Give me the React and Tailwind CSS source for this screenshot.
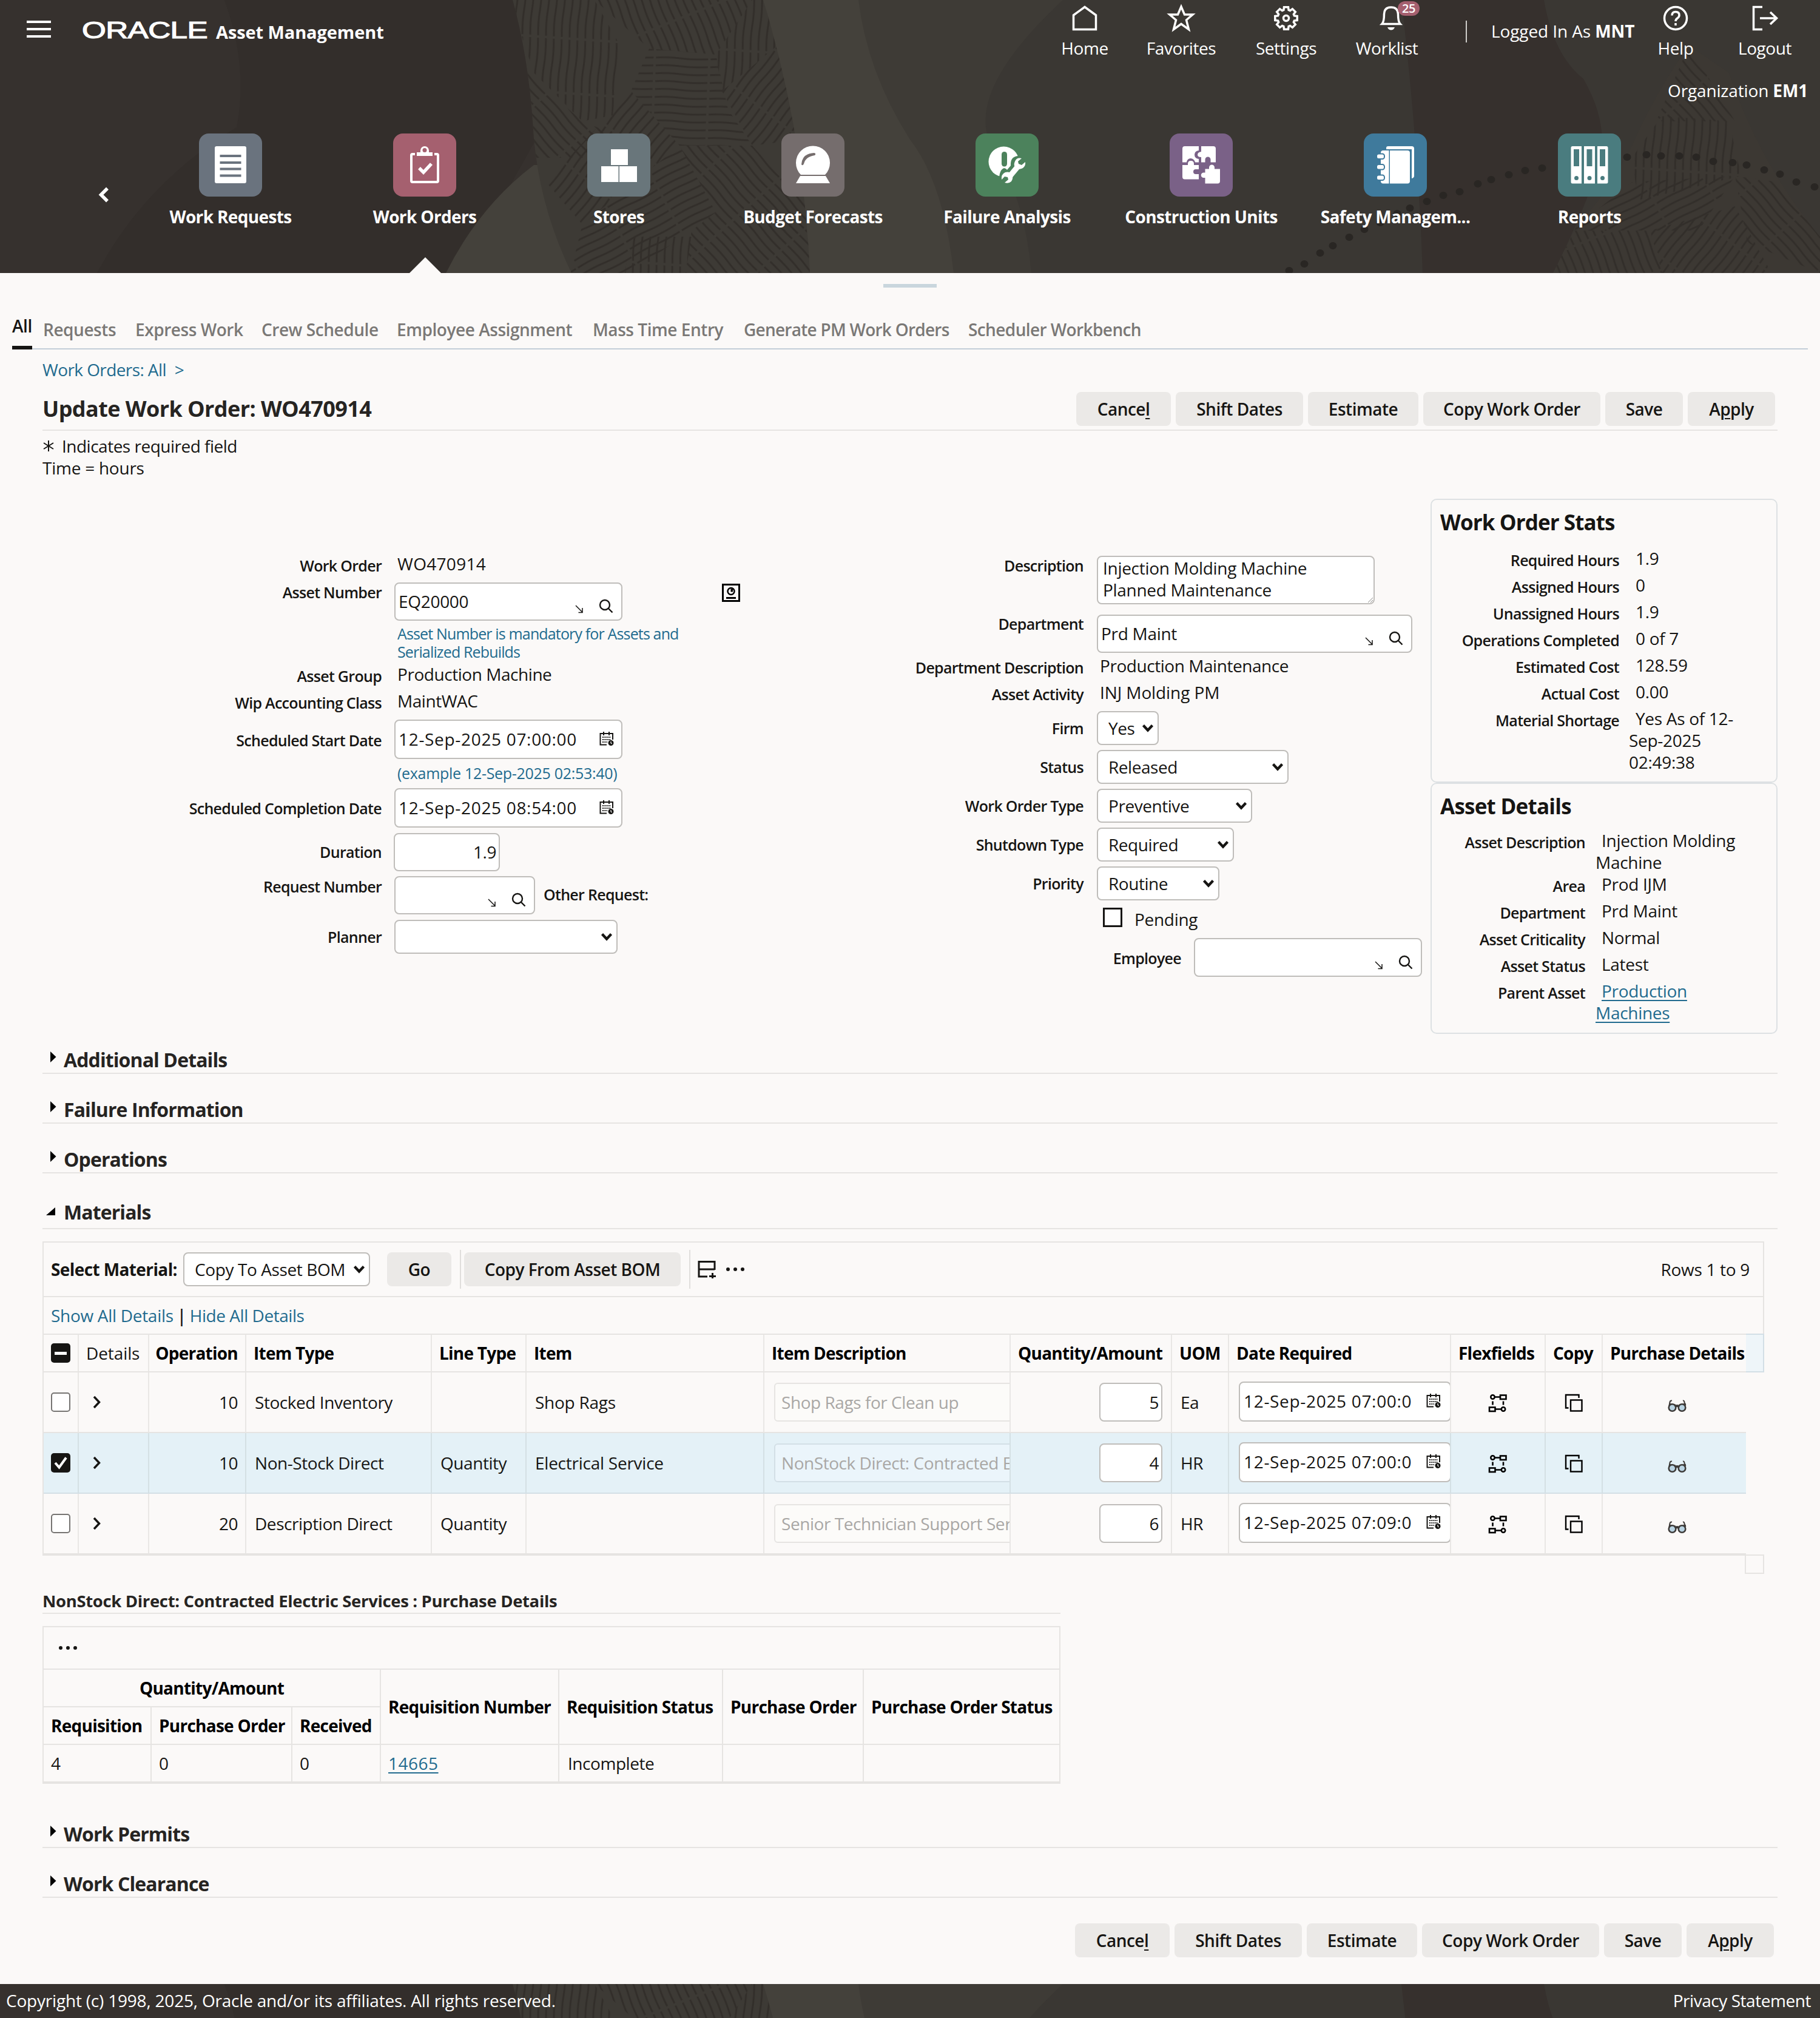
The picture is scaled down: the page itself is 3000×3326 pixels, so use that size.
import React from "react";

const modules = [
  { name: "Work Requests", color: "bg-[#6a737e]", icon: "requests" },
  { name: "Work Orders", color: "bg-[#a5606f]", icon: "orders" },
  { name: "Stores", color: "bg-[#69767b]", icon: "stores" },
  { name: "Budget Forecasts", color: "bg-[#756d6d]", icon: "budget" },
  { name: "Failure Analysis", color: "bg-[#4c825c]", icon: "failure" },
  { name: "Construction Units", color: "bg-[#7a6187]", icon: "construction" },
  { name: "Safety Managem...", color: "bg-[#3f7a9c]", icon: "safety" },
  { name: "Reports", color: "bg-[#4a7c7f]", icon: "reports" },
];

const tabs = [
  { name: "Requests", width: "w-[152px]" },
  { name: "Express Work", width: "w-[208px]" },
  { name: "Crew Schedule", width: "w-[223px]" },
  { name: "Employee Assignment", width: "w-[323px]" },
  { name: "Mass Time Entry", width: "w-[249px]" },
  { name: "Generate PM Work Orders", width: "w-[370px] tracking-[-0.75px]" },
  { name: "Scheduler Workbench", width: "w-[300px] tracking-[-0.6px]" },
];

const materials = [
  { op: 10, type: "Stocked Inventory", line: "", item: "Shop Rags", desc: "Shop Rags for Clean up", qty: 5, uom: "Ea", date: "12-Sep-2025 07:00:0" },
  { op: 10, type: "Non-Stock Direct", line: "Quantity", item: "Electrical Service", desc: "NonStock Direct: Contracted Electric", qty: 4, uom: "HR", date: "12-Sep-2025 07:00:0", selected: true },
  { op: 20, type: "Description Direct", line: "Quantity", item: "", desc: "Senior Technician Support Services", qty: 6, uom: "HR", date: "12-Sep-2025 07:09:0" },
];

const COLS =
  "grid grid-cols-[58px_116px_160px_306px_156px_392px_406px_266px_94px_366px_156px_94px_236px]";

/* ---------- Header artwork ---------- */

const HatchPatterns = ({ id }) => (
  <defs>
    {[4, 38, -42, 92, 62, -22].map((angle, i) => (
      <pattern
        key={angle}
        id={`${id}-h${i}`}
        width="13"
        height="90"
        patternUnits="userSpaceOnUse"
        patternTransform={`rotate(${angle})`}
      >
        <path d="M5 0 Q7 25 5 45 T5 86" stroke="#322e2a" strokeWidth="3" fill="none" />
      </pattern>
    ))}
    <clipPath id={`${id}-left`}>
      <path d="M845 0 Q870 90 878 200 Q884 330 942 450 L1335 450 Q1325 220 1258 0 Z" />
    </clipPath>
    <clipPath id={`${id}-right`}>
      <path d="M2784 75 Q2730 150 2690 240 Q2650 320 2600 370 L2560 450 L3000 450 L3000 390 Q2900 270 2850 120 Z" />
    </clipPath>
  </defs>
);

const dots = [
  [2125, 446], [2150, 435], [2176, 417], [2197, 405], [2224, 391], [2249, 378], [2275, 367], [2303, 352],
  [2324, 343], [2352, 332], [2379, 322], [2406, 316], [2436, 303], [2458, 296], [2487, 288], [2514, 281],
  [2542, 277], [2682, 259], [2714, 255], [2738, 257], [2768, 257], [2796, 259], [2824, 266], [2856, 268],
  [2879, 272], [2908, 280], [2934, 287], [2961, 300], [2991, 308],
];

const HeaderArt = ({ id }) => (
  <svg className="absolute left-0 top-0" width="3000" height="450" viewBox="0 0 3000 450">
    <HatchPatterns id={id} />
    <rect width="3000" height="450" fill="#36312e" />
    <path d="M370 0 Q410 110 390 210 Q240 300 160 450 L760 450 L900 200 L860 0 Z" fill="#332e2b" />
    <path d="M880 272 Q790 340 735 450 H960 V272 Z" fill="#44413b" />
    <path d="M1240 0 H1500 V450 H1300 Z" fill="#44413b" />
    <path d="M1415 0 Q1430 120 1500 230 V0 Z" fill="#3e3b36" />
    <path d="M1500 0 H3000 V450 H1500 Z" fill="#3a3733" />
    <path d="M1500 0 H1752 Q1580 160 1640 250 Q1690 330 1700 450 H1500 Z" fill="#3e3b36" />
    <path d="M1500 230 Q1555 300 1572 450 H1500 Z" fill="#44413b" />
    <path d="M2310 0 H2545 Q2560 90 2610 130 Q2650 200 2638 260 Q2620 330 2560 450 H2345 Q2338 240 2310 0 Z" fill="#36302d" />
    <g clipPath={`url(#${id}-left)`}>
      <rect x="840" width="500" height="450" fill="#3d3a35" />
      <path d="M840 0 H980 L1025 80 L1010 190 L960 200 L880 120 Z" fill={`url(#${id}-h0)`} />
      <path d="M980 0 H1240 L1180 90 L1070 80 Z" fill={`url(#${id}-h5)`} />
      <path d="M870 120 L960 200 L1010 220 L960 260 H870 Z" fill={`url(#${id}-h2)`} />
      <path d="M1070 80 L1180 90 L1200 180 L1240 240 L1120 240 L1040 150 Z" fill={`url(#${id}-h3)`} />
      <path d="M1240 0 H1300 V60 L1190 150 L1180 90 Z" fill={`url(#${id}-h0)`} />
      <path d="M1300 60 L1320 230 L1240 240 L1190 150 Z" fill={`url(#${id}-h1)`} />
      <path d="M1040 150 L1120 240 L960 370 L900 300 Z" fill={`url(#${id}-h1)`} />
      <path d="M1120 240 L1240 240 L1330 340 V390 L1180 350 Z" fill={`url(#${id}-h2)`} />
      <path d="M960 370 L1120 240 L1180 350 L1040 450 H940 Z" fill={`url(#${id}-h4)`} />
      <path d="M1040 390 L1140 390 L1130 450 H1030 Z" fill={`url(#${id}-h0)`} />
      <path d="M1140 380 L1180 350 L1340 390 V450 H1130 Z" fill={`url(#${id}-h2)`} />
    </g>
    <g clipPath={`url(#${id}-right)`}>
      <rect x="2550" width="450" height="450" fill="#3c3833" />
      <path d="M2784 75 L2860 200 L2730 200 Z" fill={`url(#${id}-h2)`} />
      <path d="M2740 190 L2850 200 L2870 290 L2700 330 L2690 260 Z" fill={`url(#${id}-h0)`} />
      <path d="M2690 300 L2860 290 L2800 380 L2590 380 Z" fill={`url(#${id}-h4)`} />
      <path d="M2860 290 L3000 310 V450 L2880 400 Z" fill={`url(#${id}-h2)`} />
      <path d="M2560 380 H2720 L2740 450 H2550 Z" fill={`url(#${id}-h5)`} />
      <path d="M2720 380 L2860 340 L2920 450 H2740 Z" fill={`url(#${id}-h1)`} />
      <path d="M2850 120 L3000 390 V300 Z" fill={`url(#${id}-h0)`} />
    </g>
    {dots.map(([x, y]) => (
      <ellipse key={x} cx={x} cy={y} rx="6.5" ry="6" fill="#292623" />
    ))}
  </svg>
);

/* ---------- Icons ---------- */

const ModuleIcon = ({ name }) => {
  const common = { width: 104, height: 104, viewBox: "0 0 104 104", fill: "#fff" };
  switch (name) {
    case "requests":
      return (
        <svg {...common}>
          <path fillRule="evenodd" d="M29 21H75a3 3 0 0 1 3 3V79a3 3 0 0 1-3 3H29a3 3 0 0 1-3-3V24a3 3 0 0 1 3-3ZM34.500 35v4H69.500v-4ZM34.500 46v4H69.500v-4ZM34.500 56.500v4H69.500v-4ZM34.500 67.500v4H69.500v-4Z" />
        </svg>
      );
    case "orders":
      return (
        <svg {...common}>
          <path d="M36 34H32a2 2 0 0 0-2 2V78a2 2 0 0 0 2 2H72a2 2 0 0 0 2-2V36a2 2 0 0 0-2-2H68" fill="none" stroke="#fff" strokeWidth="4" />
          <path fillRule="evenodd" d="M39 37V31H45V28a7 7 0 0 1 14 0V31H65V37ZM52 24a3.5 3.5 0 1 0 0 7 3.5 3.5 0 0 0 0-7Z" />
          <path d="M43 57 L50 64 L63 50" fill="none" stroke="#fff" strokeWidth="5.5" />
        </svg>
      );
    case "stores":
      return (
        <svg {...common}>
          <rect x="39" y="26" width="28" height="26" />
          <rect x="23" y="54" width="28.5" height="26" />
          <rect x="53" y="54" width="29" height="26" />
        </svg>
      );
    case "budget":
      return (
        <svg {...common}>
          <path d="M32 68a28 28 0 1 1 40 0Z" />
          <path d="M31 70H73L80 82H24Z" />
          <path d="M33 51Q34 33 54 32Q58 33 55 36Q40 38 37 50Q35 54 33 51Z" fill="#756d6d" />
        </svg>
      );
    case "failure":
      return (
        <svg {...common}>
          <circle cx="46.500" cy="46.500" r="25" />
          <rect x="43" y="30" width="9" height="24.500" rx="4.500" fill="#4c825c" />
          <path d="M39 76Q39 60 47 57L50 58L52 60L58 53Q57 38 70 37L86 46L62 80Z" fill="#4c825c" />
          <path d="M56 71L71 53" stroke="#fff" strokeWidth="9" />
          <path d="M76 41Q68 39 65 46Q62 52 66 56Q71 61 78 57Q83 53 82 47L76 52L71 50L70 46Z" />
          <path d="M43 76Q42 67 49 64Q56 62 60 67Q63 73 59 79Q55 83 48 81L54 76L53 72L48 71Z" />
        </svg>
      );
    case "construction":
      return (
        <svg {...common}>
          <path d="M25 21H48V28Q41 29 41 35T48 42V47.500H42Q40 41 34.500 41T28 47.500H21V25a4 4 0 0 1 4-4Z" />
          <path d="M52 21H72a4 4 0 0 1 4 4V47.500H67.500V43a4.500 4.500 0 0 0-9 0V47.500H52V39Q46 39 46 35T52 30Z" />
          <path d="M21 52H30V50Q30 45 35 45T40 50V52H48V59H43a4 4 0 0 0 0 8H48V75.500H25a4 4 0 0 1-4-4Z" />
          <path d="M58.500 58.500H65V56a4.500 4.500 0 0 1 9 0V58.500H83V78.500a4 4 0 0 1-4 4H58.500V73H56a4 4 0 0 1 0-8.500H58.500Z" />
        </svg>
      );
    case "safety":
      return (
        <svg {...common}>
          <path d="M37 25V24a3 3 0 0 1 3-3H79a4 4 0 0 1 4 4V70q0 3-4 4V26H37Z" />
          <rect x="28" y="28" width="48" height="54.500" rx="4" />
          <rect x="41.500" y="28" width="1.500" height="55" fill="#3f7a9c" />
          {[34, 51.5, 69].map((y) => (
            <rect key={y} x="21" y={y - 0.5} width="13" height="8.500" rx="3.500" stroke="#3f7a9c" strokeWidth="2" />
          ))}
        </svg>
      );
    default:
      return (
        <svg {...common}>
          <path fillRule="evenodd" d="M24 21H39V82.500H24a2.500 2.500 0 0 1-2.500-2.500V23.500A2.500 2.500 0 0 1 24 21ZM26 26V54H35V26Z" />
          <path fillRule="evenodd" d="M43 21H61V82.500H43ZM47.500 26V54H56.500V26Z" />
          <path fillRule="evenodd" d="M65 21H80a2.500 2.500 0 0 1 2.500 2.500V80a2.500 2.500 0 0 1-2.500 2.500H65ZM69 26V54H78V26Z" />
          {[30.5, 52, 73.5].map((x) => (
            <circle key={x} cx={x} cy="73.500" r="3.500" fill="#4a7c7f" />
          ))}
        </svg>
      );
  }
};

const TopIcon = ({ className = "", children }) => (
  <svg className={`h-12 w-12 ${className}`} viewBox="0 0 48 48" fill="none" stroke="#fff" strokeWidth="3.5">
    {children}
  </svg>
);

const gearPath = () => {
  const pts = [];
  for (let i = 0; i < 8; i++) {
    const a = (i * Math.PI) / 4;
    [[-0.3, 14], [-0.19, 18.5], [0.19, 18.5], [0.3, 14]].forEach(([d, r]) => {
      pts.push(`${(24 + r * Math.sin(a + d)).toFixed(1)} ${(24 - r * Math.cos(a + d)).toFixed(1)}`);
    });
  }
  return `M${pts.join("L")}Z`;
};

const SearchIcon = () => (
  <svg width="24" height="24" viewBox="0 0 24 24" fill="none" stroke="#161513" strokeWidth="2.4">
    <circle cx="10" cy="10" r="8" />
    <path d="M15.500 15.500L22.500 22.500" />
  </svg>
);

const LovArrow = () => (
  <svg width="16" height="16" viewBox="0 0 16 16" fill="none" stroke="#161513" strokeWidth="1.500">
    <path d="M2 2L13 13M13 6V13.500H6.500" />
  </svg>
);

const CalendarIcon = () => (
  <svg className="relative -top-px" width="24" height="24" viewBox="0 0 24 24" fill="none" stroke="#161513">
    <path d="M12 21.500H1.500V3H22V13" strokeWidth="2" />
    <path d="M7 0V6M16 0V6" strokeWidth="2" />
    <path d="M5 9H19M5 13H19M5 17H13" strokeWidth="2" strokeDasharray="2 1.300" />
    <circle cx="19" cy="18.500" r="4.500" fill="#161513" stroke="none" />
    <path d="M19 16V18.500L20.500 20" stroke="#fff" strokeWidth="1.200" />
  </svg>
);

const FlexIcon = () => (
  <svg width="32" height="32" viewBox="0 0 32 32" fill="none" stroke="#000" strokeWidth="2.600">
    <circle cx="7.500" cy="6.500" r="3.200" />
    <path d="M10.500 6.500H19.500M12 26.500H21.500M7.500 13.500V19.500M25 13.500V19.500" />
    <rect x="20" y="3.500" width="9.500" height="6.500" />
    <rect x="2" y="23.500" width="9.500" height="6.500" />
    <circle cx="25" cy="26.500" r="3.200" />
  </svg>
);

const CopyIcon = () => (
  <svg width="32" height="32" viewBox="0 0 32 32" fill="none" stroke="#000" strokeWidth="2.400">
    <path d="M24.500 8V3H3V24.500H7.500" />
    <rect x="11" y="11.500" width="18.500" height="18" />
  </svg>
);

const GlassesIcon = () => (
  <svg width="34" height="24" viewBox="0 0 34 24" fill="none" stroke="#3d3a38" strokeWidth="2.600">
    <path d="M8 2.500Q5 2 4.500 5T3.500 11M26 2.500Q28 2 28.500 5T29.500 11" strokeWidth="2" />
    <path d="M3 8.500L14 10.500M31 8.500L20 10.500" strokeWidth="3.500" />
    <circle cx="8.500" cy="14" r="5.800" fill="#b9d3e2" />
    <circle cx="24.500" cy="14" r="5.800" fill="#b9d3e2" />
    <path d="M13 12.500Q16.500 9.500 20 12.500" strokeWidth="4" />
  </svg>
);

const Dots = () => (
  <svg width="32" height="8" viewBox="0 0 32 8" fill="#161513">
    <circle cx="4" cy="4" r="3" />
    <circle cx="16" cy="4" r="3" />
    <circle cx="28" cy="4" r="3" />
  </svg>
);

const Chevron = () => (
  <svg className="shrink-0" width="20" height="14" viewBox="0 0 20 14" fill="none" stroke="#161513" strokeWidth="4.300">
    <path d="M2.500 2.500L10 10.500L17.500 2.500" />
  </svg>
);

/* ---------- Form pieces ---------- */

const Label = ({ className = "", children }) => (
  <div className={`shrink-0 text-right text-[25px] leading-[36px] font-semibold tracking-[-0.7px] ${className}`}>{children}</div>
);

const Lookup = ({ value = "", className }) => (
  <div className={`flex shrink-0 items-center rounded-lg border-2 border-[#bfbdba] bg-white pl-[5px] ${className}`}>
    <span className="flex-1 pb-[2px] tracking-[-0.3px]">{value}</span>
    <span className="mr-[24px] pt-[25px]"><LovArrow /></span>
    <span className="mr-[13px] pt-[15px]"><SearchIcon /></span>
  </div>
);

const DateInput = ({ value, className }) => (
  <div className={`flex shrink-0 items-center rounded-lg border-2 border-[#bfbdba] bg-white pl-[5px] ${className}`}>
    <span className="flex-1 overflow-hidden pb-[2px] whitespace-nowrap tracking-[0.68px]">{value}</span>
    <CalendarIcon />
  </div>
);

const Select = ({ value = "", className }) => (
  <div className={`flex h-14 shrink-0 items-center justify-between rounded-lg border-2 border-[#bfbdba] bg-white pl-[17px] pr-[6px] ${className}`}>
    <span className="whitespace-nowrap">{value}</span>
    <Chevron />
  </div>
);

const Button = ({ className, children }) => (
  <button className={`h-14 rounded-lg bg-[#ebe9e7] text-[28px] font-semibold tracking-[-0.5px] whitespace-nowrap ${className}`}>
    {children}
  </button>
);

const ActionButtons = () => (
  <div className="flex gap-2">
    <Button className="w-[156px]">Cance<span className="underline underline-offset-4">l</span></Button>
    <Button className="w-[210px]">Shift Dates</Button>
    <Button className="w-[182px]">Estimate</Button>
    <Button className="w-[292px]">Copy Work Order</Button>
    <Button className="w-[128px]">Save</Button>
    <Button className="w-[144px]">A<span className="underline underline-offset-4">p</span>ply</Button>
  </div>
);

const LeftRow = ({ label, labelPad = "pt-[3px]", height, children }) => (
  <div className={`flex items-start ${height}`}>
    <Label className={`mr-[21px] w-[559px] ${labelPad}`}>{label}</Label>
    {children}
  </div>
);

const RightRow = ({ label, labelPad = "pt-[3px]", height, children }) => (
  <div className={`flex items-start ${height}`}>
    <Label className={`mr-[22px] w-[386px] ${labelPad}`}>{label}</Label>
    {children}
  </div>
);

const StatRow = ({ label, children, labelWidth = "mr-4 w-[309px]", indent = "indent-[11px]" }) => (
  <div className="flex min-h-11 items-start">
    <Label className={`pt-[3px] ${labelWidth}`}>{label}</Label>
    <div className={`leading-[36px] whitespace-nowrap tracking-[-0.3px] ${indent}`}>{children}</div>
  </div>
);

const SectionHeader = ({ title, open = false, className }) => (
  <div className={`flex w-[2860px] items-end border-b-2 border-[#e6e4e2] ${className}`}>
    {open ? (
      <svg className="mb-[15px] ml-[6px] mr-[13px]" width="16" height="13" viewBox="0 0 16 13"><path d="M15 0V13H0Z" /></svg>
    ) : (
      <svg className="mb-[15px] ml-[13px] mr-[12px]" width="10" height="20" viewBox="0 0 10 20"><path d="M0 1L9.500 10L0 19Z" /></svg>
    )}
    <h2 className="text-[32px] leading-[40px] font-bold tracking-[-0.9px] text-[#262422]">{title}</h2>
  </div>
);

const Cell = ({ className = "", children }) => (
  <div className={`flex items-center overflow-hidden border-r-2 border-[#161513]/8 whitespace-nowrap ${className}`}>{children}</div>
);

const th = "font-bold tracking-[-0.75px] text-black";

const MaterialRow = ({ row }) => (
  <div className={`${COLS} w-[2806px] ${row.selected ? "h-[100px] border-b-2 border-[#d3dfe6] bg-[#e4f1f7]" : "h-[100px] border-b-2 border-[#e6e4e2]"}`}>
    <Cell className="pl-3">
      {row.selected ? (
        <svg width="32" height="32" viewBox="0 0 32 32">
          <rect width="32" height="32" rx="5" fill="#161513" />
          <path d="M7 16L13.500 23.500L25 7.500" fill="none" stroke="#fff" strokeWidth="4" />
        </svg>
      ) : (
        <div className="h-8 w-8 rounded-[5px] border-2 border-[#767472] bg-white" />
      )}
    </Cell>
    <Cell className="pl-[23px]">
      <svg width="14" height="22" viewBox="0 0 14 22" fill="none" stroke="#161513" strokeWidth="3.500"><path d="M2 2L10.500 11L2 20" /></svg>
    </Cell>
    <Cell className="justify-end pr-3">{row.op}</Cell>
    <Cell className="pl-[14px]">{row.type}</Cell>
    <Cell className="pl-[14px]">{row.line}</Cell>
    <Cell className="pl-[14px] tracking-[-0.25px]">{row.item}</Cell>
    <Cell className="pl-4">
      <div className={`flex h-16 w-[460px] shrink-0 items-center rounded-md border-2 pl-[10px] text-[#a9a7a5] ${row.selected ? "border-[#d3dfe6] bg-[#ebf5fb]" : "border-[#e6e4e2] bg-[#fcfbf9]"}`}>
        {row.desc}
      </div>
    </Cell>
    <Cell className="justify-end pr-[14px]">
      <div className="flex h-16 w-[104px] items-center justify-end rounded-lg border-2 border-[#bfbdba] bg-white pr-1">{row.qty}</div>
    </Cell>
    <Cell className="pl-[14px]">{row.uom}</Cell>
    <Cell className="pl-4">
      <DateInput value={row.date} className="mb-[2px] h-[66px] w-[350px] pl-[6px] pr-[15px]" />
    </Cell>
    <Cell className="justify-center pt-[2px]"><FlexIcon /></Cell>
    <Cell className="justify-center pt-[2px]"><CopyIcon /></Cell>
    <div className="flex items-center pl-[106px] pt-[14px]"><GlassesIcon /></div>
  </div>
);

/* ---------- Page ---------- */

const Header = () => (
  <header className="relative h-[450px] w-[3000px] overflow-hidden text-white">
    <HeaderArt id="top" />
    <div className="relative flex h-[110px] items-start">
      <svg className="ml-11 mt-[34px]" width="40" height="28" fill="#fff">
        <path d="M0 0H40V4H0ZM0 12H40V16H0ZM0 24H40V28H0Z" />
      </svg>
      <svg className="ml-[46px] mt-[18px]" width="224" height="64">
        <text x="5" y="45" fill="#fff" stroke="#fff" strokeWidth="1.200" textLength="207" lengthAdjust="spacingAndGlyphs" fontFamily="Liberation Sans" fontSize="39">ORACLE</text>
      </svg>
      <div className="ml-[2px] mt-[35px] w-[1350px] text-[29px] leading-[36px] font-bold tracking-[-0.1px]">Asset Management</div>

      <div className="mt-[6px] flex w-[164px] flex-col items-center">
        <TopIcon><path d="M5.500 42.500V19L24 5.500L42.500 19V42.500Z" /></TopIcon>
        <span className="mt-[7px] leading-[36px]">Home</span>
      </div>
      <div className="mt-[6px] flex w-[154px] flex-col items-center">
        <TopIcon><path d="M24 5L29.500 18H43L32.500 27L36.500 42.500L24 33.500L11.500 42.500L15.500 27L5 18H18.500Z" /></TopIcon>
        <span className="mt-[7px] leading-[36px]">Favorites</span>
      </div>
      <div className="mt-[6px] flex w-[192px] flex-col items-center">
        <TopIcon><path d={gearPath()} /><circle cx="24" cy="24" r="4.500" /></TopIcon>
        <span className="mt-[7px] leading-[36px]">Settings</span>
      </div>
      <div className="relative mt-[6px] flex w-[144px] flex-col items-center">
        <TopIcon className="ml-[9px]">
          <path d="M9 33.500Q12.500 30 12.500 17Q13 6 24 6T35.500 17Q35.500 30 39 33.500Z" />
          <path d="M18 39Q20 43.500 24 43.500T30 39Z" fill="#fff" stroke="none" />
        </TopIcon>
        <span className="mr-1 mt-[7px] leading-[36px]">Worklist</span>
        <span className="absolute -top-1 left-[88px] h-6 w-[36px] rounded-full bg-[#a5606f] text-center text-[20px] leading-6 font-semibold">25</span>
      </div>
      <div className="ml-[56px] mt-[34px] h-9 w-[2px] bg-[#cfcdca]" />
      <div className="ml-10 mt-[33px] w-[252px] leading-[36px] whitespace-nowrap tracking-[-0.1px]">Logged In As <b>MNT</b></div>
      <div className="mt-[6px] flex w-[104px] flex-col items-center">
        <TopIcon>
          <circle cx="24" cy="24" r="18.500" />
          <path d="M18 19.500Q18 13.500 24 13.500T30 19Q30 22 27 24T24 29" />
          <path d="M24 32V36" strokeWidth="3.500" />
        </TopIcon>
        <span className="mt-[7px] leading-[36px]">Help</span>
      </div>
      <div className="ml-[46px] mt-[6px] flex w-[98px] flex-col items-center">
        <TopIcon>
          <path d="M20 5.500H5.500V42.500H20" />
          <path d="M16 24H43M33 14L43.500 24L33 34" strokeWidth="3.600" />
        </TopIcon>
        <span className="mt-[7px] leading-[36px]">Logout</span>
      </div>
    </div>
    <div className="relative h-[110px] pr-5 pt-[21px] text-right leading-[36px] tracking-[-0.15px]">Organization <b>EM1</b></div>
    <nav className="relative flex">
      <div className="w-[220px] pl-[162px] pt-[88px]">
        <svg width="18" height="26" viewBox="0 0 18 26" fill="none" stroke="#fff" strokeWidth="5.500"><path d="M15 2.500L4.500 13L15 23.500" /></svg>
      </div>
      {modules.map((m) => (
        <div key={m.name} className="flex w-[320px] flex-col items-center">
          <div className={`h-[104px] w-[104px] rounded-2xl ${m.color}`}><ModuleIcon name={m.icon} /></div>
          <span className="mt-[15px] text-[28px] leading-[36px] font-bold tracking-[-0.65px]">{m.name}</span>
        </div>
      ))}
    </nav>
    <svg className="absolute bottom-0 left-[675px]" width="52" height="26"><path d="M26 0L52 26H0Z" fill="#fbf9f8" /></svg>
  </header>
);

const LeftForm = () => (
  <div className="w-[1330px] pt-[89px]">
    <LeftRow label="Work Order" height="h-11"><span className="pl-[5px] leading-[36px] tracking-[0.3px]">WO470914</span></LeftRow>
    <LeftRow label="Asset Number" height="h-[74px]">
      <Lookup value="EQ20000" className="mt-[5px] h-[63px] w-[376px]" />
      <svg className="ml-[164px] mt-[7px]" width="30" height="30" viewBox="0 0 30 30" fill="none" stroke="#000" strokeWidth="3">
        <rect x="1.500" y="1.500" width="27" height="27" />
        <circle cx="15" cy="12.500" r="5.500" strokeWidth="2.500" />
        <path d="M14.500 8V13.500H18V9Z" fill="#000" stroke="none" />
        <path d="M7 23.500H23" strokeWidth="3" />
      </svg>
    </LeftRow>
    <div className="h-16 pl-[585px] text-[25px] leading-[30px] tracking-[-0.85px] text-[#226b8f]">
      Asset Number is mandatory for Assets and<br />Serialized Rebuilds
    </div>
    <LeftRow label="Asset Group" height="h-11"><span className="pl-[5px] leading-[36px]">Production Machine</span></LeftRow>
    <LeftRow label="Wip Accounting Class" height="h-11"><span className="pl-[5px] leading-[36px]">MaintWAC</span></LeftRow>
    <LeftRow label="Scheduled Start Date" labelPad="pt-[21px]" height="h-[78px]">
      <DateInput value="12-Sep-2025 07:00:00" className="mt-[5px] h-[65px] w-[376px] pr-3" />
    </LeftRow>
    <div className="h-[35px] pl-[585px] text-[25px] leading-[30px] tracking-[-0.3px] text-[#226b8f]">(example 12-Sep-2025 02:53:40)</div>
    <LeftRow label="Scheduled Completion Date" labelPad="pt-[20px]" height="h-[74px]">
      <DateInput value="12-Sep-2025 08:54:00" className="mt-[5px] h-[65px] w-[376px] pr-3" />
    </LeftRow>
    <LeftRow label="Duration" labelPad="pt-[18px]" height="h-[71px]">
      <div className="-ml-px mt-[5px] flex h-[63px] w-[175px] items-center justify-end rounded-lg border-2 border-[#bfbdba] bg-white pb-[2px] pr-1">1.9</div>
    </LeftRow>
    <LeftRow label="Request Number" labelPad="pt-[4px]" height="h-[72px]">
      <Lookup className="mt-[5px] h-[63px] w-[232px]" />
      <Label className="ml-[14px] pt-[17px]">Other Request:</Label>
    </LeftRow>
    <LeftRow label="Planner" labelPad="pt-[15px]" height="h-[64px]"><Select className="mt-[5px] w-[368px]" /></LeftRow>
  </div>
);

const RightForm = () => (
  <div className="w-[958px] pt-[90px]">
    <RightRow label="Description" labelPad="pt-[2px]" height="h-24">
      <div className="relative mt-[4px] h-[80px] w-[458px] rounded-lg border-2 border-[#bfbdba] bg-white pl-2 leading-[36px] tracking-[-0.3px]">
        Injection Molding Machine<br />Planned Maintenance
        <svg className="absolute bottom-px right-px" width="8" height="8" stroke="#8a8886"><path d="M0 8L8 0M4 8L8 4" /></svg>
      </div>
    </RightRow>
    <RightRow label="Department" labelPad="pt-[2px]" height="h-[71px]"><Lookup value="Prd Maint" className="mt-[5px] h-[63px] w-[520px]" /></RightRow>
    <RightRow label="Department Description" height="h-11"><span className="pl-[5px] leading-[36px]">Production Maintenance</span></RightRow>
    <RightRow label="Asset Activity" height="h-11"><span className="pl-[5px] leading-[36px] tracking-[-0.1px]">INJ Molding PM</span></RightRow>
    <RightRow label="Firm" labelPad="pt-[15px]" height="h-16"><Select value="Yes" className="mt-[5px] w-[102px]" /></RightRow>
    <RightRow label="Status" labelPad="pt-[15px]" height="h-16"><Select value="Released" className="mt-[5px] w-[316px]" /></RightRow>
    <RightRow label="Work Order Type" labelPad="pt-[15px]" height="h-16"><Select value="Preventive" className="mt-[5px] w-[256px]" /></RightRow>
    <RightRow label="Shutdown Type" labelPad="pt-[15px]" height="h-16"><Select value="Required" className="mt-[5px] w-[226px]" /></RightRow>
    <RightRow label="Priority" labelPad="pt-[15px]" height="h-16"><Select value="Routine" className="mt-[5px] w-[202px]" /></RightRow>
    <RightRow label="" height="h-[54px]">
      <div className="ml-[10px] mt-[9px] h-8 w-8 border-[3px] border-[#161513] bg-white" />
      <span className="ml-5 mt-[10px] leading-[36px] tracking-[-0.3px]">Pending</span>
    </RightRow>
    <div className="flex items-start">
      <Label className="mr-[21px] w-[547px] pt-5">Employee</Label>
      <Lookup className="mt-[5px] h-[64px] w-[376px]" />
    </div>
  </div>
);

const SideCards = () => {
  const detail = { labelWidth: "mr-[17px] w-[253px]", indent: "indent-[10px]" };
  return (
    <div className="w-[572px]">
      <div className="h-[468px] rounded-[10px] border-2 border-[#dde1e3] pt-4">
        <h2 className="mb-5 pl-[14px] text-[35px] leading-[42px] font-bold tracking-[-0.9px]">Work Order Stats</h2>
        <StatRow label="Required Hours">1.9</StatRow>
        <StatRow label="Assigned Hours">0</StatRow>
        <StatRow label="Unassigned Hours">1.9</StatRow>
        <StatRow label="Operations Completed">0 of 7</StatRow>
        <StatRow label="Estimated Cost">128.59</StatRow>
        <StatRow label="Actual Cost">0.00</StatRow>
        <StatRow label="Material Shortage">Yes As of 12-<br />Sep-2025<br />02:49:38</StatRow>
      </div>
      <div className="h-[414px] rounded-[10px] border-2 border-[#dde1e3] pt-4">
        <h2 className="mb-[17px] pl-[14px] text-[35px] leading-[42px] font-bold tracking-[-0.75px]">Asset Details</h2>
        <StatRow label="Asset Description" {...detail}>Injection Molding<br />Machine</StatRow>
        <StatRow label="Area" {...detail}>Prod IJM</StatRow>
        <StatRow label="Department" {...detail}>Prd Maint</StatRow>
        <StatRow label="Asset Criticality" {...detail}>Normal</StatRow>
        <StatRow label="Asset Status" {...detail}>Latest</StatRow>
        <StatRow label="Parent Asset" {...detail}>
          <a className="text-[#226b8f] underline decoration-2 underline-offset-4">Production<br />Machines</a>
        </StatRow>
      </div>
    </div>
  );
};

const MaterialsTable = () => (
  <div className="mt-5 w-[2838px]">
    <div className="border-x-2 border-t-2 border-[#e6e4e2]">
      <div className="flex h-[88px] items-center pl-3 pr-[22px]">
        <span className="w-[218px] font-bold tracking-[-0.6px] whitespace-nowrap">Select Material:</span>
        <Select value="Copy To Asset BOM" className="w-[308px] tracking-[-0.4px]" />
        <Button className="ml-[28px] w-[106px]">Go</Button>
        <div className="mx-[5px] ml-[14px] h-16 w-[2px] bg-[#e0dedc]" />
        <Button className="w-[357px]">Copy From Asset BOM</Button>
        <div className="ml-[14px] h-16 w-[2px] bg-[#e0dedc]" />
        <svg className="ml-[11px]" width="32" height="30" viewBox="0 0 32 30" fill="none" stroke="#161513" strokeWidth="3">
          <path d="M29 16V2.500H3V27H17M3 15H29M20 26.500H31M25.500 21V32" />
        </svg>
        <span className="ml-[15px] flex-1"><Dots /></span>
        <span className="tracking-[-0.3px]">Rows 1 to 9</span>
      </div>
      <div className="flex h-[62px] items-center border-t-2 border-[#e6e4e2] pl-3 text-[#226b8f]">
        <a className="tracking-[-0.3px]">Show All Details</a><span className="mx-[6px] font-semibold text-[#161513]">|</span><a>Hide All Details</a>
      </div>
    </div>
    <div className="flex border-l-2 border-[#e6e4e2]">
      <div className={`${COLS} h-16 w-[2806px] border-y-2 border-[#e6e4e2]`}>
        <Cell className="pl-3">
          <svg width="32" height="32"><rect width="32" height="32" rx="5" fill="#161513" /><rect x="6" y="14" width="20" height="5" fill="#fff" /></svg>
        </Cell>
        <Cell className="pl-3 tracking-[-0.1px]">Details</Cell>
        <Cell className={`justify-end pr-3 ${th}`}>Operation</Cell>
        <Cell className={`pl-3 ${th}`}>Item Type</Cell>
        <Cell className={`pl-3 ${th}`}>Line Type</Cell>
        <Cell className={`pl-3 ${th}`}>Item</Cell>
        <Cell className={`pl-3 ${th}`}>Item Description</Cell>
        <Cell className={`pl-3 ${th}`}>Quantity/Amount</Cell>
        <Cell className={`pl-3 ${th}`}>UOM</Cell>
        <Cell className={`pl-3 ${th}`}>Date Required</Cell>
        <Cell className={`pl-3 ${th}`}>Flexfields</Cell>
        <Cell className={`pl-3 ${th}`}>Copy</Cell>
        <div className={`flex items-center pl-3 whitespace-nowrap ${th}`}>Purchase Details</div>
      </div>
      <div className="h-16 w-[30px] border-y-2 border-r-2 border-[#d3dfe6] bg-[#eef5f9]" />
    </div>
    <div className="w-[2808px] border-b-2 border-l-2 border-[#e6e4e2]">
      {materials.map((row) => (
        <MaterialRow key={row.type} row={row} />
      ))}
    </div>
  </div>
);

const cellBase = "flex items-center border-r-2 border-[#e6e4e2] pl-3 whitespace-nowrap";

const PurchaseDetails = () => (
  <div className="w-[1678px]">
    <div className="relative h-24 border-b-2 border-[#e6e4e2] pt-[57px] text-[27.5px] leading-[36px] font-bold tracking-[-0.35px] text-[#262422]">
      NonStock Direct: Contracted Electric Services : Purchase Details
      <div className="absolute -right-[1160px] -top-[2px] h-8 w-8 border-2 border-[#e6e4e2]" />
    </div>
    <div className="mt-5 border-2 border-b-4 border-r-0 border-[#e6e4e2]">
      <div className="flex h-[68px] items-center border-r-2 border-[#e6e4e2] pl-6"><Dots /></div>
      <div className="flex h-[126px] border-y-2 border-[#e6e4e2] font-bold tracking-[-0.75px] text-black">
        <div className="w-[556px]">
          <div className="flex h-[62px] items-center justify-center border-r-2 border-b-2 border-[#e6e4e2]">Quantity/Amount</div>
          <div className="flex h-[60px]">
            <div className={`${cellBase} w-[178px]`}>Requisition</div>
            <div className={`${cellBase} w-[232px]`}>Purchase Order</div>
            <div className={`${cellBase} w-[146px]`}>Received</div>
          </div>
        </div>
        <div className={`${cellBase} w-[294px]`}>Requisition Number</div>
        <div className={`${cellBase} w-[270px]`}>Requisition Status</div>
        <div className={`${cellBase} w-[232px]`}>Purchase Order</div>
        <div className={`${cellBase} w-[324px]`}>Purchase Order Status</div>
      </div>
      <div className="flex h-[60px]">
        <div className={`${cellBase} w-[178px]`}>4</div>
        <div className={`${cellBase} w-[232px]`}>0</div>
        <div className={`${cellBase} w-[146px]`}>0</div>
        <div className={`${cellBase} w-[294px]`}>
          <a className="tracking-[0.5px] text-[#226b8f] underline decoration-2 underline-offset-4">14665</a>
        </div>
        <div className={`${cellBase} w-[270px]`}><span className="pl-[2px]">Incomplete</span></div>
        <div className={`${cellBase} w-[232px]`} />
        <div className={`${cellBase} w-[324px]`} />
      </div>
    </div>
  </div>
);

export default function App() {
  return (
    <div className="flex h-[3326px] w-[3000px] flex-col bg-[#fbf9f8] font-['Open_Sans',sans-serif] text-[28px] tracking-[-0.45px] text-[#161513]">
      <Header />

      <div className="mx-auto mt-[18px] h-[6px] w-[88px] bg-[#c9d6dd]" />
      <div className="ml-5 mr-5 flex h-[102px] items-end border-b-2 border-[#c3ced8] font-semibold text-[#7a7876]">
        <div className="-mb-[2px] mr-[18px] h-[57px] w-[33px] border-b-[6px] border-[#161513] leading-[36px] font-semibold text-[#161513]">All</div>
        {tabs.map((t) => (
          <div key={t.name} className={`mb-[13px] shrink-0 leading-[36px] whitespace-nowrap ${t.width}`}>{t.name}</div>
        ))}
      </div>

      <main className="pl-[70px]">
        <div className="flex h-[70px] items-start pt-[15px] leading-[36px] text-[#226b8f]">
          <span className="tracking-[-0.6px]">Work Orders: All</span>
          <span className="ml-[14px]">&gt;</span>
        </div>
        <div className="flex h-16 w-[2860px] items-start justify-between border-b-2 border-[#e6e4e2] pr-1">
          <h1 className="text-[36px] leading-[56px] font-bold tracking-[-0.58px] text-[#262422]">Update Work Order: WO470914</h1>
          <ActionButtons />
        </div>
        <div className="h-[112px] pt-[7px] leading-[36px]">
          <div className="flex items-center tracking-[-0.5px]">
            <svg className="mr-[13px] ml-[1px]" width="18" height="18" viewBox="0 0 18 18" stroke="#161513" strokeWidth="2"><path d="M9 0V18M1 4L17 14M17 4L1 14" /></svg>
            Indicates required field
          </div>
          <div className="tracking-[-0.25px]">Time = hours</div>
        </div>
        <div className="flex h-[882px]">
          <LeftForm />
          <RightForm />
          <SideCards />
        </div>

        <SectionHeader title="Additional Details" className="h-[66px] pb-px" />
        <SectionHeader title="Failure Information" className="h-[82px] pb-px" />
        <SectionHeader title="Operations" className="h-[82px] pb-px" />
        <SectionHeader title="Materials" open className="h-[92px] pb-[6px]" />
        <MaterialsTable />
        <PurchaseDetails />
        <SectionHeader title="Work Permits" className="h-[106px] pb-px" />
        <SectionHeader title="Work Clearance" className="h-[82px] pb-px" />
        <div className="mt-[42px] flex w-[2854px] justify-end">
          <ActionButtons />
        </div>
      </main>

      <footer className="relative mt-auto h-14 overflow-hidden text-white">
        <HeaderArt id="foot" />
        <div className="relative flex justify-between pl-[10px] pr-[15px] pt-[9px] leading-[36px]">
          <span className="tracking-[-0.2px]">Copyright (c) 1998, 2025, Oracle and/or its affiliates. All rights reserved.</span>
          <span>Privacy Statement</span>
        </div>
      </footer>
    </div>
  );
}
